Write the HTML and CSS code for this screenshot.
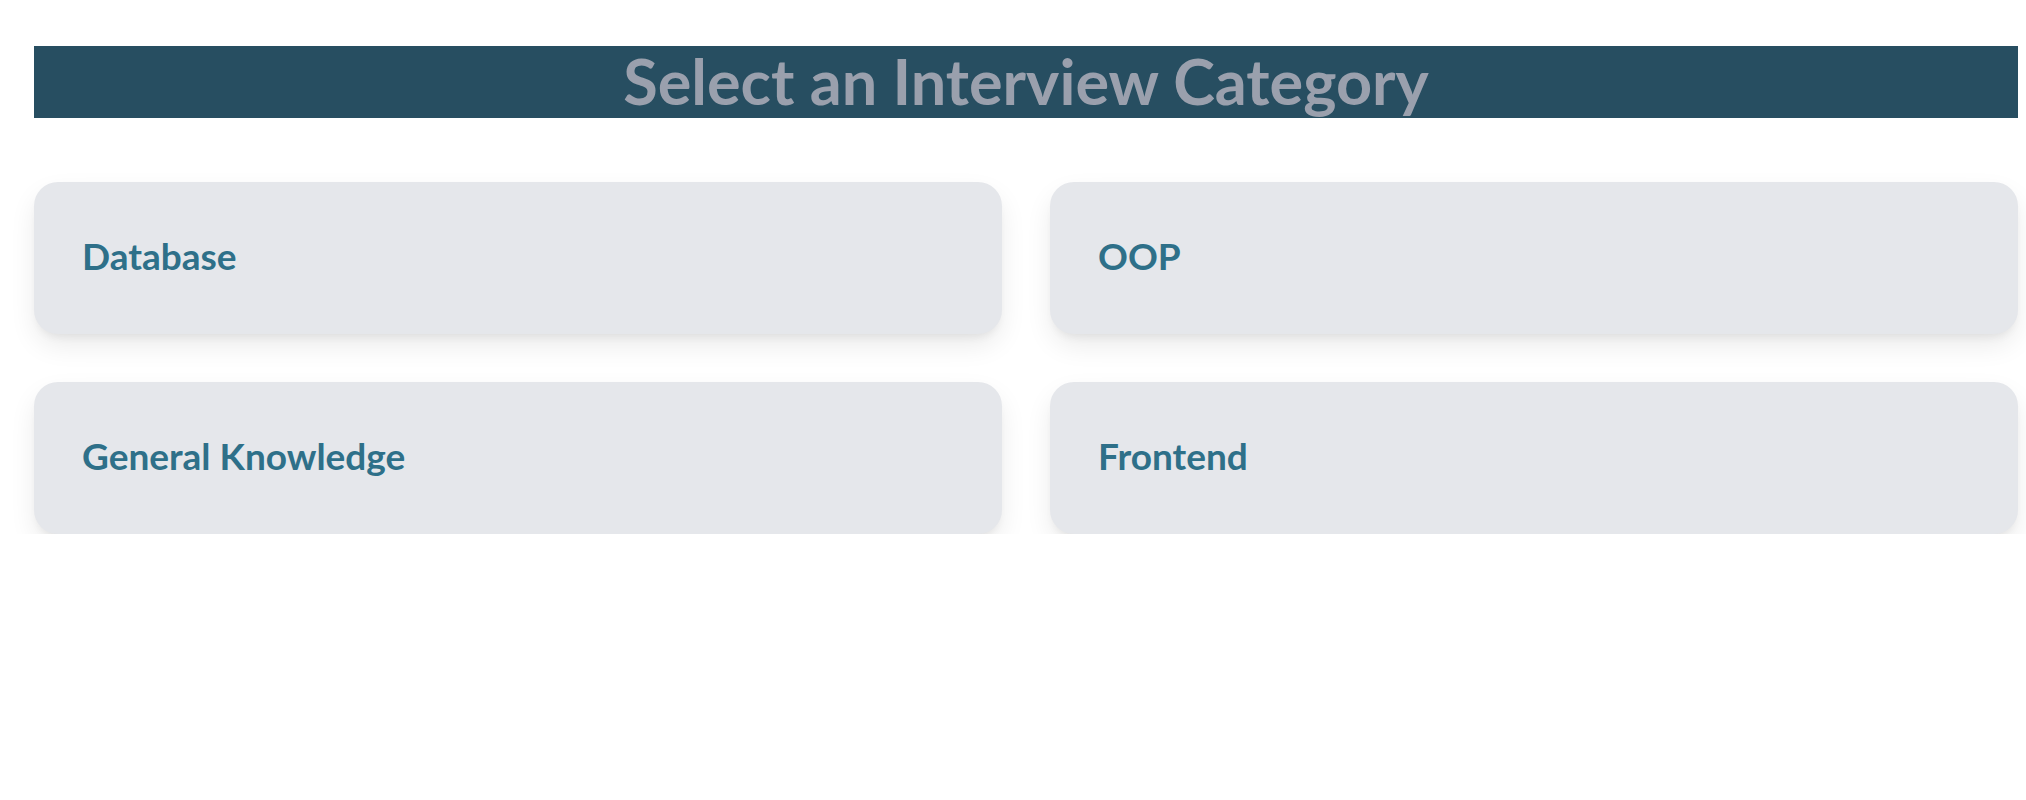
FILE: index.html
```html
<!DOCTYPE html>
<html lang="en">
<head>
<meta charset="utf-8">
<title>Select an Interview Category</title>
<link rel="stylesheet" href="styles.css">
</head>
<body>
<main class="page">
  <h1 class="title">Select an Interview Category</h1>
  <section class="grid">
    <div class="card"><span class="card-label">Database</span></div>
    <div class="card"><span class="card-label">OOP</span></div>
    <div class="card"><span class="card-label">General Knowledge</span></div>
    <div class="card"><span class="card-label">Frontend</span></div>
  </section>
</main>
</body>
</html>
```

FILE: styles.css
```css
html, body {
  margin: 0;
  padding: 0;
  background: #ffffff;
}
body {
  font-family: "Lato", "Open Sans", "Liberation Sans", sans-serif;
}
.page {
  padding: 46px 8px 0 34px;
}
.title {
  margin: 0;
  height: 72px;
  background: #274e61;
  color: #9aa0ad;
  font-size: 63px;
  font-weight: 700;
  line-height: 70px;
  text-align: center;
}
.grid {
  margin-top: 64px;
  display: grid;
  grid-template-columns: 1fr 1fr;
  gap: 48px;
}
.card {
  box-sizing: border-box;
  height: 152px;
  background: #e5e7eb;
  border-radius: 24px;
  box-shadow: 0 12px 28px -2px rgba(0,0,0,0.09), 0 6px 10px -4px rgba(0,0,0,0.07);
  display: flex;
  align-items: center;
  padding: 0 0 5px 48px;
}
.card-label {
  color: #2e7089;
  font-size: 37px;
  font-weight: 700;
}
```
